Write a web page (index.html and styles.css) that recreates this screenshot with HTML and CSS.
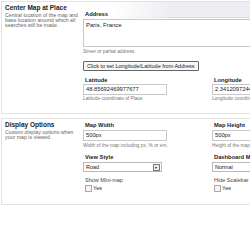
FILE: index.html
```html
<!DOCTYPE html>
<html lang="en">
<head>
  <meta charset="UTF-8">
  <title>Map Settings</title>
  <link rel="stylesheet" href="styles.css">
</head>
<body>
  <div class="settings">
    <div class="section top">
      <div class="section-info">
        <h3>Center Map at Place</h3>
        <p>Central location of the map and base location around which all searches will be made.</p>
      </div>
      <div class="section-fields first">
        <div class="field">
          <label>Address</label>
          <div class="textarea">Paris, France</div>
          <div class="hint spaced">Street or partial address.</div>
        </div>
        <div class="field">
          <button class="btn">Click to set Longitude/Latitude from Address</button>
        </div>
        <div class="field-row">
          <div class="field">
            <label>Latitude</label>
            <div class="input">48.85692469977677</div>
            <div class="hint">Latitude coordinate of Place</div>
          </div>
          <div class="field">
            <label>Longitude</label>
            <div class="input">2.3412097244262695</div>
            <div class="hint">Longitude coordinate of Place</div>
          </div>
        </div>
      </div>
    </div>

    <div class="section">
      <div class="section-info">
        <h3>Display Options</h3>
        <p>Custom display options when your map is viewed.</p>
      </div>
      <div class="section-fields">
        <div class="field-row">
          <div class="field">
            <label>Map Width</label>
            <div class="input">500px</div>
            <div class="hint spaced">Width of the map including px, % or em.</div>
          </div>
          <div class="field">
            <label>Map Height</label>
            <div class="input">500px</div>
            <div class="hint spaced">Height of the map including px, % or em.</div>
          </div>
        </div>
        <div class="field-row">
          <div class="field">
            <label>View Style</label>
            <div class="select"><span>Road</span><span class="arrow"></span></div>
          </div>
          <div class="field">
            <label>Dashboard Map Size</label>
            <div class="select"><span>Normal</span><span class="arrow"></span></div>
          </div>
        </div>
        <div class="field-row">
          <div class="field">
            <label class="plain">Show Mini-map</label>
            <div class="check"><span class="box"></span>Yes</div>
          </div>
          <div class="field">
            <label class="plain">Hide Scalebar</label>
            <div class="check"><span class="box"></span>Yes</div>
          </div>
        </div>
      </div>
    </div>
  </div>
</body>
</html>
```

FILE: styles.css
```css
body {
  margin: 0;
  background: #fff;
  font-family: 'Liberation Sans', Arial, sans-serif;
  color: #333;
  overflow: hidden;
}
.settings {
  width: 340px;
  padding: 1px 0 0 1px;
}
.section {
  display: grid;
  grid-template-columns: 81px 1fr;
  border: 1px solid #e2e2e2;
  margin-bottom: 4px;
}
.section.top {
  background:
    linear-gradient(to right, rgba(220, 220, 228, 0) 110px, #dcdce4 170px) 0 15px / 100% 1px no-repeat,
    linear-gradient(to right, rgba(237, 237, 243, 0) 110px, #ededf3 170px) 0 0 / 100% 15px no-repeat;
}
.section-info {
  padding: 2px 0 0 3px;
}
.section-info h3 {
  margin: 0;
  font-size: 6.5px;
  line-height: 8px;
  color: #222;
}
.section-info p {
  margin: 1px 0 0;
  font-size: 5.25px;
  line-height: 5px;
  color: #666;
}
.section-fields {
  padding: 2px 0 12px;
}
.section-fields.first {
  padding-top: 8px;
  padding-bottom: 11px;
}
.field-row {
  display: grid;
  grid-template-columns: 129px 1fr;
}
.field label {
  display: block;
  font-size: 5.75px;
  font-weight: bold;
  line-height: 8px;
  color: #222;
  padding-left: 2px;
}
.field label.plain {
  font-weight: normal;
  font-size: 5.5px;
  color: #444;
}
.textarea {
  margin-top: 1px;
  height: 24px;
  border: 1px solid #c8c8c8;
  padding: 1px 2px;
  font-size: 6px;
  line-height: 8px;
  color: #222;
}
.hint {
  font-size: 4.8px;
  line-height: 6px;
  margin-top: 1px;
  color: #777;
}
.hint.spaced {
  margin-top: 2px;
}
.btn {
  display: block;
  margin: 6px 0 5px;
  height: 10px;
  padding: 0 3px;
  border: 1px solid #666;
  border-radius: 1px;
  background: #f7f7f7;
  font-family: inherit;
  font-size: 5.5px;
  color: #222;
}
.input {
  width: 78px;
  height: 9px;
  margin-top: 1px;
  border: 1px solid #c8c8c8;
  padding: 0 2px;
  font-size: 5.75px;
  line-height: 9px;
  color: #222;
}
.first .input {
  margin-top: 0;
}
.select {
  display: flex;
  justify-content: space-between;
  align-items: center;
  width: 74px;
  height: 8px;
  margin-top: 1px;
  border: 1px solid #b9b9b9;
  padding: 0 1px 0 2px;
  font-size: 5.5px;
  line-height: 8px;
  color: #222;
}
.select .arrow {
  width: 5px;
  height: 5px;
  border: 1px solid #777;
  background: #eee;
  position: relative;
}
.select .arrow::after {
  content: "";
  position: absolute;
  left: 1px;
  top: 2px;
  border-left: 1.5px solid transparent;
  border-right: 1.5px solid transparent;
  border-top: 2px solid #222;
}
.field-row + .field-row {
  margin-top: 4px;
}
.check {
  display: flex;
  align-items: center;
  gap: 1px;
  font-size: 5.5px;
  line-height: 8px;
  color: #222;
  padding-left: 2px;
}
.check .box {
  width: 5px;
  height: 5px;
  border: 1px solid #a8a8a8;
  background: #f4f4f4;
}
```
